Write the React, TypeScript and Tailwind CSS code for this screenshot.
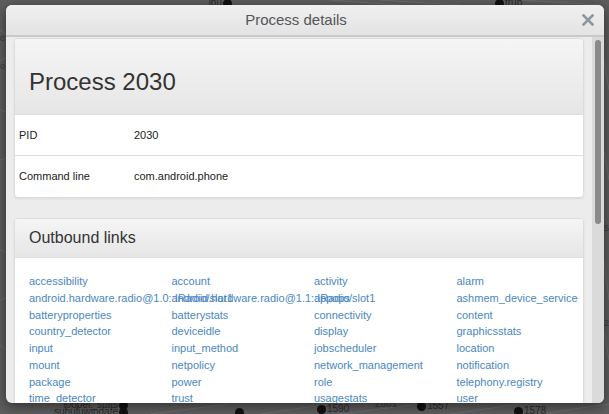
import React from 'react';

const LINKS = [
    'accessibility', 'account', 'activity', 'alarm',
    'android.hardware.radio@1.0::IRadio/slot1', 'android.hardware.radio@1.1::IRadio/slot1', 'appops', 'ashmem_device_service',
    'batteryproperties', 'batterystats', 'connectivity', 'content',
    'country_detector', 'deviceidle', 'display', 'graphicsstats',
    'input', 'input_method', 'jobscheduler', 'location',
    'mount', 'netpolicy', 'network_management', 'notification',
    'package', 'power', 'role', 'telephony.registry',
    'time_detector', 'trust', 'usagestats', 'user',
];

// graph nodes peeking out behind the overlay
const NODES = [
    { x: 232, y: 3, label: 'ipu', left: true },
    { x: 500, y: 3, label: 'trub', left: false },
    { x: 128, y: 405, label: 'looper_stats', left: true },
    { x: 128, y: 412, label: 'subuluwindate', left: true },
    { x: 240, y: 413, label: '', left: false },
    { x: 322, y: 409, label: '1590', left: false },
    { x: 422, y: 406, label: '1557', left: false },
    { x: 519, y: 411, label: '1578', left: false },
];

const CloseIcon = () => (
    <svg width="12" height="12" viewBox="0 0 12 12">
        <path d="M1.5 1.5 L10.5 10.5 M10.5 1.5 L1.5 10.5" stroke="#8f979c" strokeWidth="2.6" strokeLinecap="square" />
    </svg>
);

const Backdrop: React.FC = () => (
    <div className="absolute inset-0 bg-[#5d5d5d]">
        <svg className="absolute inset-0" width="609" height="414">
            <g stroke="#6c6c6c" strokeWidth="1" fill="none">
                <path d="M0 30 L6 34 M0 60 L6 58 M0 110 L6 112 M0 160 L6 158 M0 250 L6 252 M0 300 L6 298 M0 345 L6 350" />
                <path d="M150 414 L230 404 M260 414 L330 404 M340 414 L420 404 M450 414 L520 404 M540 414 L609 404" />
                <path d="M330 0 L400 5 M380 0 L460 5 M520 0 L600 5" />
                <path d="M604 60 L609 90 M604 150 L609 180 M604 260 L609 300 M604 330 L609 360" />
            </g>
        </svg>
        <div className="absolute left-[0px] top-[34px] text-[9px] text-[#3a3a3a] leading-none">c</div>
        <div className="absolute left-[0px] top-[62px] text-[9px] text-[#3a3a3a] leading-none">o</div>
        <div className="absolute left-[604px] top-[224px] text-[9px] text-[#3a3a3a] leading-none">5</div>
        <div className="absolute left-[604px] top-[319px] text-[9px] text-[#3a3a3a] leading-none">2</div>
        <div className="absolute left-[375px] top-[399px] text-[10px] text-[#3a3a3a] leading-none">2801</div>
        {NODES.map((n, i) => (
            <div
                key={i}
                className="absolute flex items-center gap-[1px] text-[10px] leading-none text-[#2a2a2a]"
                style={{ left: n.left ? n.x - 80 : n.x - 5, top: n.y - 5, width: 80, justifyContent: n.left ? 'flex-end' : 'flex-start' }}
            >
                {n.left && <span>{n.label}</span>}
                <span className="w-[9px] h-[9px] rounded-full bg-[#111] shrink-0" />
                {!n.left && <span>{n.label}</span>}
            </div>
        ))}
    </div>
);

const App: React.FC = () => {
    return (
        <div className="relative w-[609px] h-[414px] overflow-hidden font-['Liberation_Sans',Arial,sans-serif]">
            <Backdrop />

            <div className="absolute left-[6px] top-[5px] w-[598px] h-[398px] rounded-[6px] bg-[#ececec] overflow-hidden flex flex-col shadow-[0_3px_12px_rgba(0,0,0,0.5)]">
                {/* header */}
                <div className="h-[32px] shrink-0 flex items-center bg-gradient-to-b from-[#f0f0f0] to-[#e3e3e3] border-b-2 border-[#c9c9c9]">
                    <div className="flex-1 text-center text-[15px] text-[#555] pl-[4px]">Process details</div>
                    <div className="w-[22px] flex items-center justify-start">
                        <CloseIcon />
                    </div>
                </div>

                {/* body */}
                <div className="flex flex-1 min-h-0">
                    <div className="flex-1 min-w-0 pl-[8px] pr-[8px] pt-[1px] overflow-hidden">
                        <div className="bg-white rounded-[4px] border border-[#dcdcdc] shadow-[0_1px_2px_rgba(0,0,0,0.08)] overflow-hidden">
                            <div className="h-[76px] bg-gradient-to-b from-[#f5f5f5] to-[#e6e6e6] flex items-center pl-[14px] pt-[10px] border-b border-[#dedede]">
                                <h1 className="text-[24px] text-[#333]">Process 2030</h1>
                            </div>
                            <div className="flex h-[41px] items-center text-[11px] text-[#222] border-b border-[#dedede]">
                                <div className="w-[114px] pl-[4px]">PID</div>
                                <div className="pl-[5px]">2030</div>
                            </div>
                            <div className="flex h-[41px] items-center text-[11px] text-[#222]">
                                <div className="w-[114px] pl-[4px]">Command line</div>
                                <div className="pl-[5px]">com.android.phone</div>
                            </div>
                        </div>

                        <div className="mt-[20px] bg-white rounded-[4px] border border-[#dcdcdc] shadow-[0_1px_2px_rgba(0,0,0,0.08)] overflow-hidden">
                            <div className="h-[39px] bg-gradient-to-b from-[#f5f5f5] to-[#e6e6e6] flex items-center pl-[14px] border-b border-[#dedede]">
                                <h2 className="text-[16px] text-[#333]">Outbound links</h2>
                            </div>
                            <div className="grid grid-cols-[repeat(4,142.5px)] pl-[14px] pt-[15px] pb-[14px] text-[11px] leading-[16.75px]">
                                {LINKS.map(l => (
                                    <a key={l} className="whitespace-nowrap text-[#4a87c2] min-w-0 overflow-visible">{l}</a>
                                ))}
                            </div>
                        </div>
                    </div>

                    {/* scrollbar */}
                    <div className="w-[12px] shrink-0 bg-[#dadada] flex justify-center pt-[3px]">
                        <div className="w-[6px] h-[184px] rounded-full bg-[#8a8a8a]" />
                    </div>
                </div>
            </div>
        </div>
    );
};

export default App;
